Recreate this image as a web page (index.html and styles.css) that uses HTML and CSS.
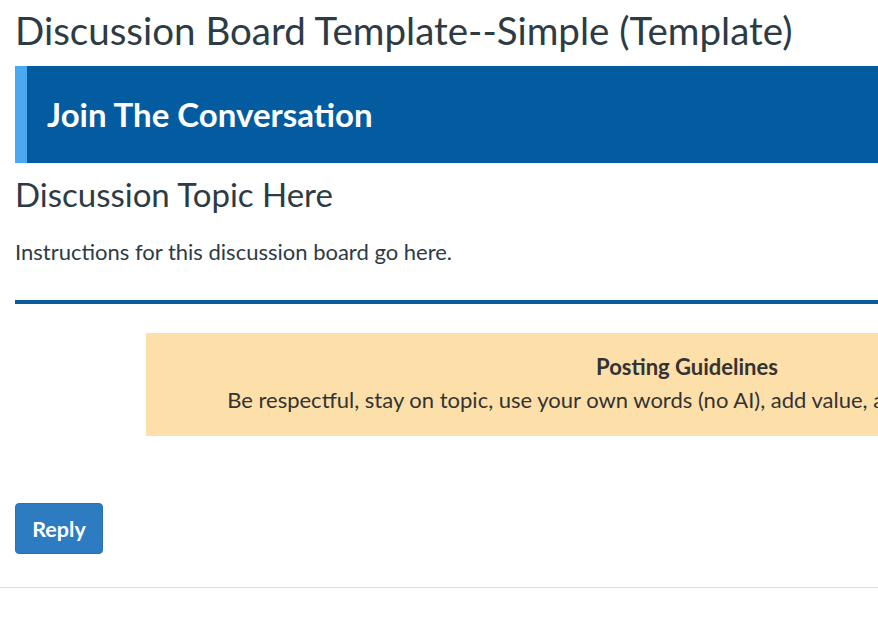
FILE: index.html
```html
<!DOCTYPE html>
<html lang="en">
<head>
<meta charset="utf-8">
<title>Discussion Board Template--Simple (Template)</title>
<link rel="stylesheet" href="styles.css">
</head>
<body>
<div class="page">
  <main class="content">
    <h1 class="page-title">Discussion Board Template--Simple (Template)</h1>
    <div class="banner">
      <h2 class="banner-title">Join The Conversation</h2>
    </div>
    <h2 class="topic">Discussion Topic Here</h2>
    <p class="instructions">Instructions for this discussion board go here.</p>
    <hr class="divider">
    <div class="guidelines">
      <p class="guidelines-title">Posting Guidelines</p>
      <p class="guidelines-text">Be respectful, stay on topic, use your own words (no AI), add value, and respond to classmates.</p>
    </div>
    <div class="actions">
      <button class="reply-btn" type="button">Reply</button>
    </div>
  </main>
  <div class="bottom-rule"></div>
</div>
</body>
</html>
```

FILE: styles.css
```css
html, body {
  margin: 0;
  padding: 0;
  background: #ffffff;
  overflow: hidden;
}

body {
  font-family: Lato, "Open Sans", "Liberation Sans", sans-serif;
  color: #2d3b45;
}

.page {
  width: 878px;
  overflow: hidden;
}

.content {
  width: 1340px;
  padding: 9px 0 0 15px;
}

.page-title {
  margin: 0;
  font-size: 38.5px;
  font-weight: 400;
  line-height: 43px;
  color: #2d3b45;
  white-space: nowrap;
}

.banner {
  margin-top: 14px;
  height: 97px;
  display: flex;
  align-items: center;
  background: #045ca0;
  border-left: 12px solid #4ba9f2;
  padding-left: 20px;
}

.banner-title {
  margin: 0;
  font-size: 33px;
  font-weight: 700;
  color: #ffffff;
  line-height: 1.2;
}

.topic {
  margin: 13px 0 0;
  font-size: 33px;
  font-weight: 400;
  line-height: 36px;
  color: #2d3b45;
}

.instructions {
  margin: 25px 0 0;
  font-size: 22px;
  line-height: 30px;
  color: #2d3b45;
}

.divider {
  margin: 33px 0 0;
  border: 0;
  height: 4px;
  background: #0c5a98;
}

.guidelines {
  margin: 29px 0 0 131px;
  width: 1082px;
  box-sizing: border-box;
  height: 103px;
  padding-top: 17px;
  background: #fddfa9;
  text-align: center;
  color: #333333;
}

.guidelines p {
  margin: 0;
  line-height: 33px;
  white-space: nowrap;
}

.guidelines-title {
  font-size: 22px;
  font-weight: 700;
}

.guidelines-text {
  font-size: 22px;
  padding-right: 14px;
}

.actions {
  margin-top: 67px;
}

.reply-btn {
  width: 88px;
  height: 51px;
  border: 1px solid #2672b5;
  border-radius: 4px;
  background: #2d7bc1;
  color: #ffffff;
  font-family: Lato, "Open Sans", "Liberation Sans", sans-serif;
  font-size: 21.5px;
  font-weight: 700;
  padding: 0;
}

.bottom-rule {
  margin-top: 33px;
  height: 1px;
  background: #dedede;
}
```
